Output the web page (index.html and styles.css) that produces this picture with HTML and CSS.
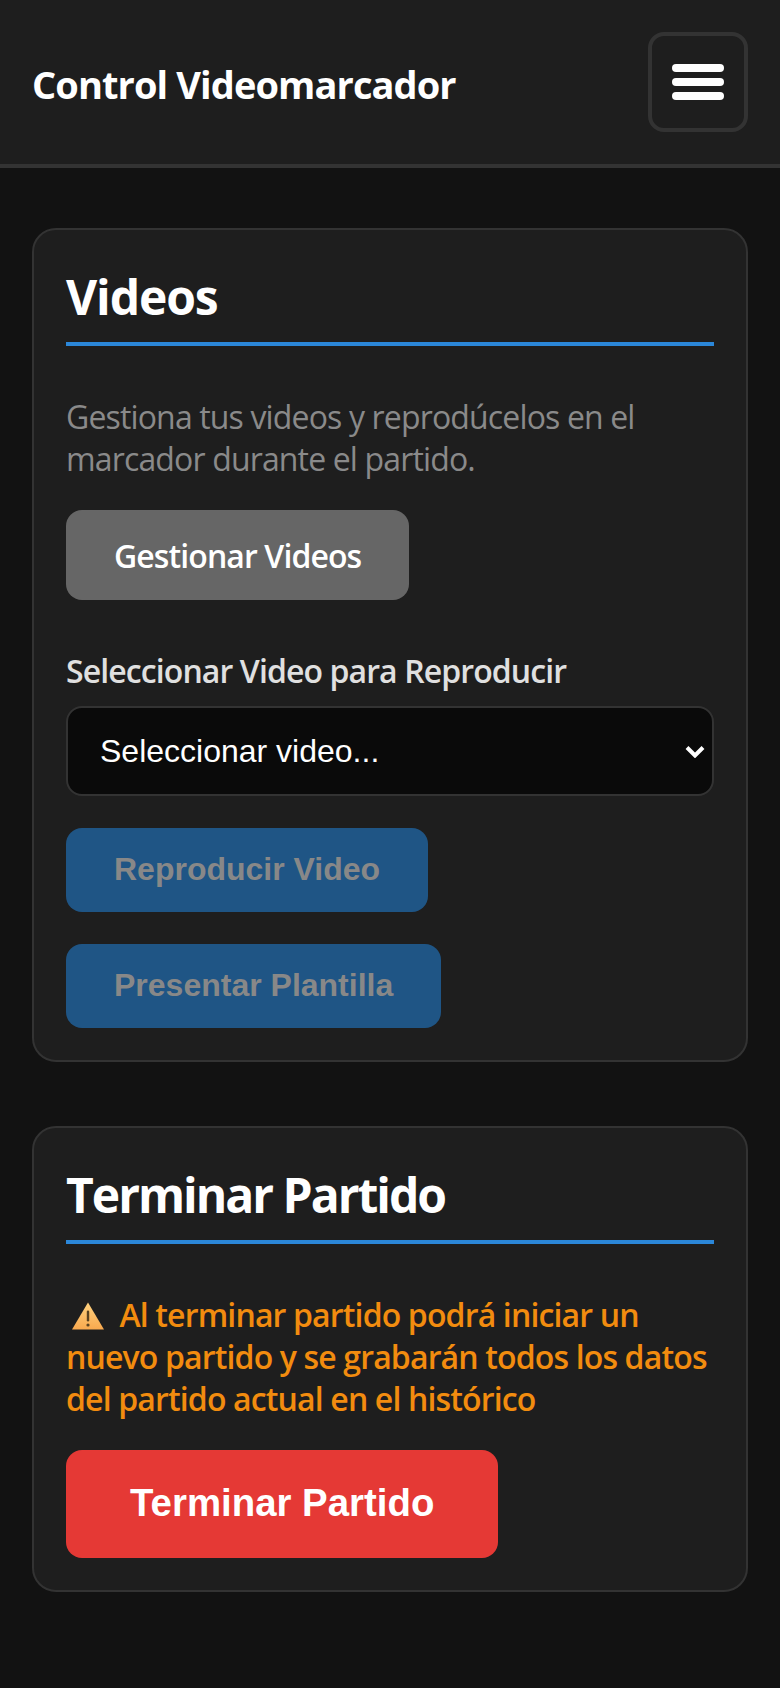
FILE: index.html
```html
<!DOCTYPE html>
<html lang="es">
<head>
<meta charset="utf-8">
<title>Control Videomarcador</title>
<link rel="stylesheet" href="styles.css">
</head>
<body>
<header class="topbar">
  <h1 class="topbar-title">Control Videomarcador</h1>
  <button class="menu-button" type="button" aria-label="Menú">
    <span class="menu-bar"></span>
    <span class="menu-bar"></span>
    <span class="menu-bar"></span>
  </button>
</header>
<main class="content">
  <section class="card">
    <h2 class="card-title">Videos</h2>
    <p class="hint">Gestiona tus videos y reprodúcelos en el marcador durante el partido.</p>
    <button class="btn btn-gray" type="button">Gestionar Videos</button>
    <label class="field-label" for="video">Seleccionar Video para Reproducir</label>
    <select class="field-select" id="video">
      <option>Seleccionar video...</option>
    </select>
    <button class="btn btn-blue" type="button" disabled>Reproducir Video</button>
    <button class="btn btn-blue" type="button" disabled>Presentar Plantilla</button>
  </section>
  <section class="card">
    <h2 class="card-title card-title-long">Terminar Partido</h2>
    <p class="warning"><svg class="warning-icon" viewBox="0 0 32 28" aria-hidden="true"><defs><linearGradient id="warn" x1="0" y1="0" x2="0" y2="1"><stop offset="0" stop-color="#ffd27f"/><stop offset="1" stop-color="#f9a94e"/></linearGradient></defs><path fill="url(#warn)" d="M16 0.5 L32 27.5 L0 27.5 Z"/><rect x="14.8" y="8.5" width="2.4" height="11" rx="1.2" fill="#5b4320"/><circle cx="16" cy="23" r="1.6" fill="#5b4320"/></svg> Al terminar partido podrá iniciar un nuevo partido y se grabarán todos los datos del partido actual en el histórico</p>
    <button class="btn btn-red" type="button">Terminar Partido</button>
  </section>
</main>
</body>
</html>
```

FILE: styles.css
```css
* { box-sizing: border-box; }
html, body { margin: 0; padding: 0; }
body {
  background: #121212;
  color: #e0e0e0;
  font-family: "Open Sans", "Noto Sans", sans-serif;
  min-height: 1688px;
}
.topbar {
  display: flex;
  align-items: center;
  justify-content: space-between;
  padding: 32px;
  background: #1e1e1e;
  border-bottom: 4px solid #333;
}
.topbar-title {
  margin: 4px 0 0;
  font-size: 38px;
  line-height: 50px;
  font-weight: 700;
  color: #fff;
  letter-spacing: -0.9px;
}
.menu-button {
  display: flex;
  flex-direction: column;
  align-items: center;
  justify-content: center;
  gap: 6px;
  width: 100px;
  height: 100px;
  padding: 0;
  background: transparent;
  border: 4px solid #333;
  border-radius: 16px;
}
.menu-bar {
  display: block;
  width: 52px;
  height: 8px;
  border-radius: 4px;
  background: #fff;
}
.content {
  display: flex;
  flex-direction: column;
  gap: 64px;
  padding: 60px 32px 32px;
}
.card {
  display: flex;
  flex-direction: column;
  align-items: flex-start;
  padding: 32px;
  background: #1e1e1e;
  border: 2px solid #333;
  border-radius: 24px;
}
.card-title {
  align-self: stretch;
  margin: 0 0 50px;
  padding: 3px 0 13px;
  border-bottom: 4px solid #2b87d9;
  font-size: 48px;
  line-height: 64px;
  font-weight: 700;
  color: #fff;
  letter-spacing: -1.1px;
}
.card-title-long { letter-spacing: -2px; }
.hint {
  margin: 0 0 30px;
  font-size: 32px;
  line-height: 42px;
  color: #8a8a8a;
  letter-spacing: -0.85px;
}
.warning {
  margin: 0 0 30px;
  font-size: 32px;
  line-height: 42px;
  font-weight: 600;
  color: #f28c0f;
  letter-spacing: -0.85px;
}
.warning-icon {
  display: inline-block;
  width: 32px;
  height: 28px;
  margin: 0 8px 0 6px;
  vertical-align: -3px;
}
.btn {
  display: block;
  border: 0;
  border-radius: 16px;
  color: #fff;
}
.btn-gray {
  height: 90px;
  padding: 0 48px;
  margin-bottom: 50px;
  background: #666;
  font: 600 32px "Open Sans", sans-serif;
  letter-spacing: -0.9px;
}
.field-label {
  margin-bottom: 14px;
  font-size: 32px;
  line-height: 42px;
  font-weight: 600;
  color: #e0e0e0;
  letter-spacing: -0.9px;
}
.field-select {
  appearance: none;
  width: 100%;
  height: 90px;
  padding: 0 60px 0 32px;
  margin-bottom: 32px;
  background-color: #0a0a0a;
  background-image: url("data:image/svg+xml,%3Csvg xmlns='http://www.w3.org/2000/svg' viewBox='0 0 20 13'%3E%3Cpath d='M2 2.5 L10 10.5 L18 2.5' fill='none' stroke='%23fff' stroke-width='4'/%3E%3C/svg%3E");
  background-repeat: no-repeat;
  background-position: right 7px center;
  background-size: 20px 13px;
  border: 2px solid #333;
  border-radius: 16px;
  color: #fff;
  color-scheme: dark;
  font: 400 32px "Liberation Sans", Arial, sans-serif;
}
.btn-blue {
  height: 84px;
  padding: 0 48px 2px;
  background: #1f5585;
  color: #888;
  font: 700 32px "Liberation Sans", Arial, sans-serif;
}
.btn-blue + .btn-blue { margin-top: 32px; }
.btn-red {
  height: 108px;
  padding: 0 64px 2px;
  background: #e53935;
  font: 700 38.4px "Liberation Sans", Arial, sans-serif;
}
```
